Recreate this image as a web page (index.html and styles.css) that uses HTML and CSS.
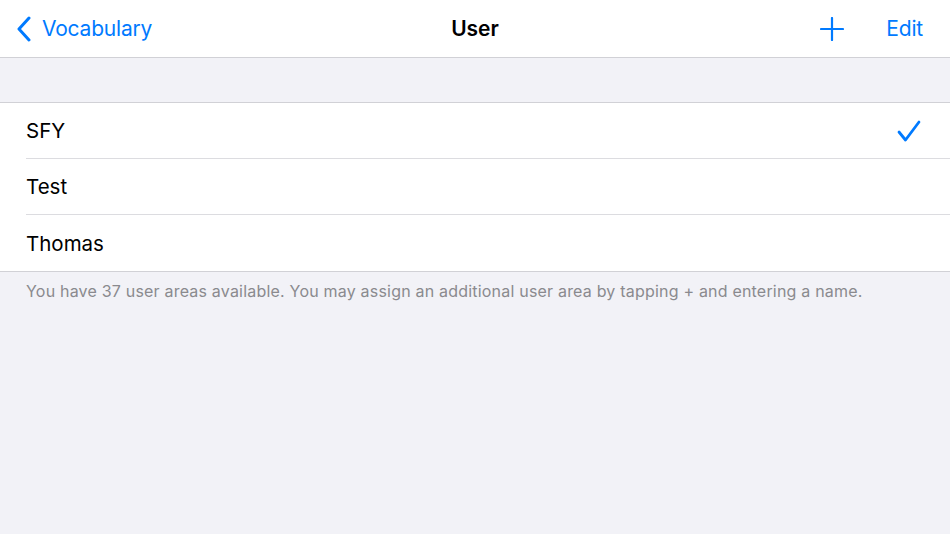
FILE: index.html
```html
<!DOCTYPE html>
<html>
<head>
<meta charset="utf-8">
<link rel="stylesheet" href="styles.css">
</head>
<body>
<div class="nav">
  <div class="nav-left">
    <svg class="chev" width="16" height="26" viewBox="0 0 16 26"><path d="M13 2 L3 13 L13 24" fill="none" stroke="#007aff" stroke-width="3" stroke-linecap="round" stroke-linejoin="round"/></svg>
    <span class="nav-link">Vocabulary</span>
  </div>
  <div class="nav-title">User</div>
  <div class="nav-right">
    <svg class="plus" width="24" height="24" viewBox="0 0 24 24"><path d="M12 1 V23 M1 12 H23" stroke="#007aff" stroke-width="2.2" stroke-linecap="round"/></svg>
    <span class="nav-link">Edit</span>
  </div>
</div>
<div class="spacer"></div>
<div class="list">
  <div class="row"><span class="label">SFY</span>
    <svg class="check" width="24" height="22" viewBox="0 0 24 22"><path d="M2 12 L8.5 20 L22 2" fill="none" stroke="#007aff" stroke-width="2.8" stroke-linecap="round" stroke-linejoin="round"/></svg>
  </div>
  <div class="row"><span class="label">Test</span></div>
  <div class="row last"><span class="label">Thomas</span></div>
</div>
<div class="footer">You have 37 user areas available. You may assign an additional user area by tapping + and entering a name.</div>
</body>
</html>
```
FILE: styles.css
```css
html, body { margin: 0; padding: 0; }
body {
  width: 950px;
  height: 534px;
  background: #f2f2f7;
  font-family: Inter, "Noto Sans", sans-serif;
  overflow: hidden;
}
.nav {
  height: 57px;
  background: #ffffff;
  border-bottom: 1px solid #d1d1d6;
  display: flex;
  align-items: center;
  justify-content: space-between;
  position: relative;
}
.nav-left {
  display: flex;
  align-items: center;
  padding-left: 16px;
  gap: 10px;
}
.nav-right {
  display: flex;
  align-items: center;
  padding-right: 27px;
  gap: 42px;
}
.nav-link {
  color: #007aff;
  font-size: 21px;
  letter-spacing: -0.2px;
}
.nav-title {
  position: absolute;
  left: 0;
  right: 0;
  text-align: center;
  font-size: 21px;
  font-weight: 600;
  color: #000;
  pointer-events: none;
}
.chev { display: block; margin-top: 1px; }
.plus { display: block; }
.spacer { height: 44px; }
.list {
  background: #fff;
  border-top: 1px solid #d1d1d6;
  border-bottom: 1px solid #d1d1d6;
}
.row {
  height: 55px;
  margin-left: 26px;
  padding-right: 29px;
  display: flex;
  align-items: center;
  justify-content: space-between;
  border-bottom: 1px solid #dcdce0;
}
.row.last { border-bottom: none; height: 56px; }
.label {
  font-size: 20.5px;
  color: #000;
  letter-spacing: 0;
}
.check { display: block; }
.footer {
  padding: 9px 26px;
  font-size: 16px;
  color: #8a8a8e;
  letter-spacing: 0.2px;
}
```
